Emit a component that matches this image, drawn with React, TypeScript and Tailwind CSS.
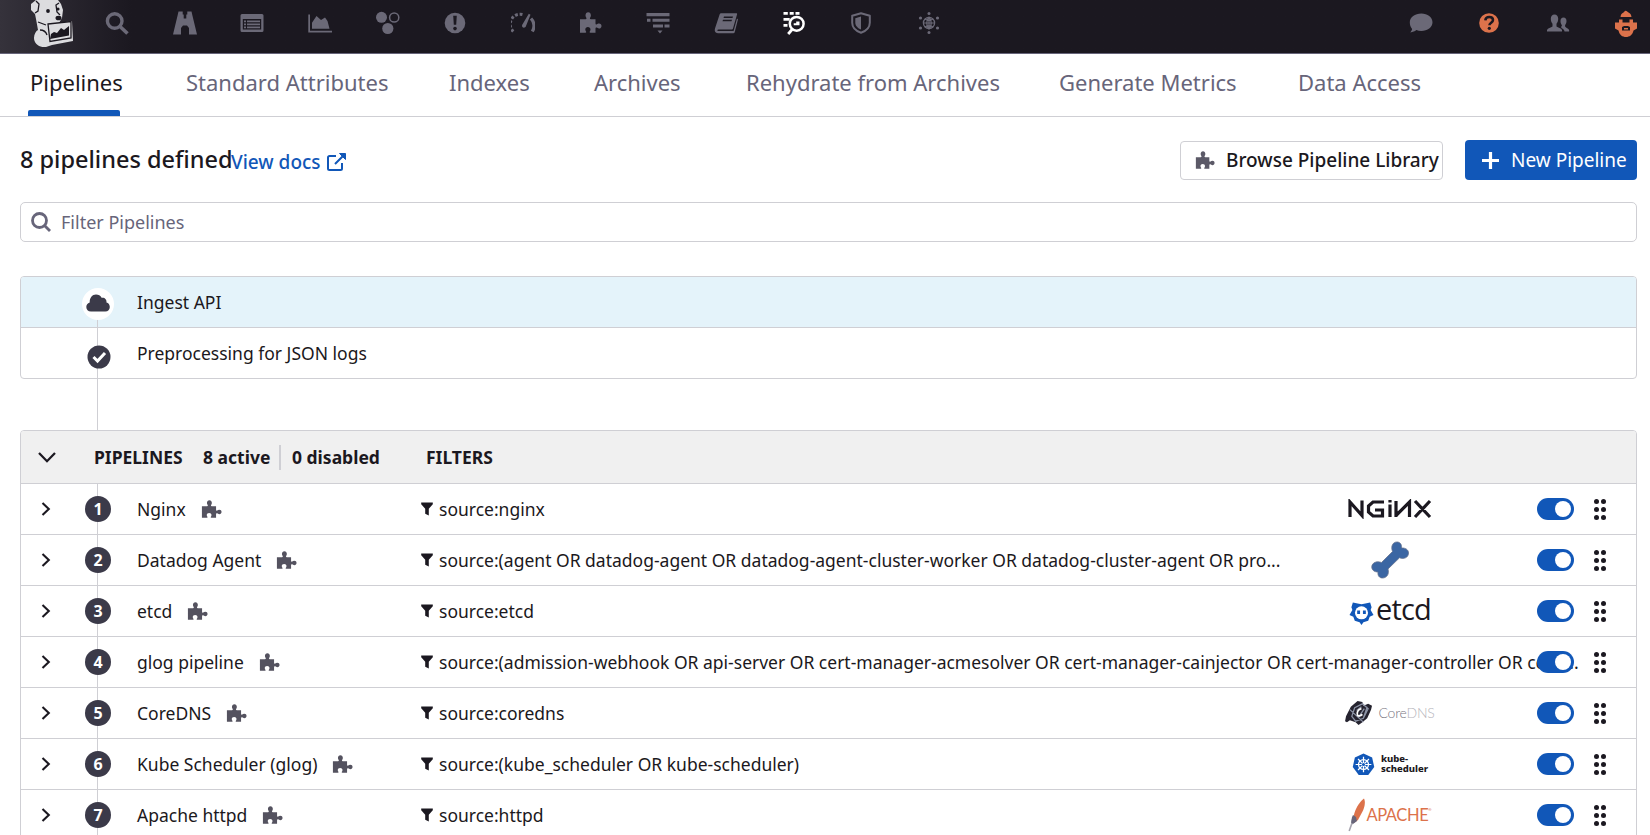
import React from "react";

type IconProps = { className?: string };

function Icon({ children, className = "" }: { children: React.ReactNode; className?: string }) {
  return (
    <svg viewBox="0 0 24 24" width="24" height="24" fill="currentColor" className={className}>
      {children}
    </svg>
  );
}

function Puzzle({ className = "h-[21px] w-[23px]" }: IconProps) {
  return (
    <svg viewBox="0 0 23 21" fill="currentColor" className={className} preserveAspectRatio="none">
      <path d="M1 7.2h5.6c.9 0 1.1-.7.7-1.4-.4-.6-.8-1.300-.8-2.200C6.500 1.500 7.600.3 9.200.3s2.700 1.200 2.700 3.300c0 .9-.4 1.600-.8 2.200-.4.700-.2 1.400.7 1.400h4.700v4.300c0 1 .6 1.200 1.300.8.600-.4 1.200-.9 2.200-.9 1.600 0 2.500 1.100 2.500 2.500s-.9 2.600-2.500 2.600c-1 0-1.600-.5-2.200-.9-.7-.4-1.300-.1-1.300.8v4.300h-5.200c-.7 0-.9-.6-.5-1.200.4-.6.7-1.100.7-1.900 0-1.500-1.100-2.500-2.600-2.500s-2.600 1-2.600 2.500c0 .8.300 1.300.7 1.900.4.600.2 1.200-.5 1.200H1z" />
    </svg>
  );
}

function DogLogo() {
  return (
    <svg viewBox="0 0 44 47" width="44" height="47" className="block">
      <path fill="#dcdcdf" d="M6 0l22 0 3 4 2 6-1 8-3 5 13-2 1 20-21 4-6 2c-6 1-12-3-12-9 0-4 2-7 4-8L6 19l-1-5L1 10 1 4z" />
      <path fill="none" stroke="#1b1820" strokeWidth="1.300" d="M6 1l3 3-1 7-3 2M29 3l-3 2 1 7 3 3M8 22l8 3M10 30c4 0 6 2 7 5M18 24l23-2.500V38L20 41.500z" />
      <circle cx="18" cy="11" r="1.900" fill="#1b1820" />
      <circle cx="28" cy="9" r="1.600" fill="#1b1820" />
      <ellipse cx="28.500" cy="18" rx="3" ry="2.300" fill="#1b1820" />
      <path fill="#1b1820" d="M20 39l1-5 3-2 3 1 4-5 3 2 5-4v9.500z" />
    </svg>
  );
}

const navIcons: { name: string; active?: boolean; art: React.ReactNode }[] = [
  {
    name: "search",
    art: (
      <Icon>
        <circle cx="9.700" cy="10" r="7.300" fill="none" stroke="currentColor" strokeWidth="3.400" />
        <path d="M15 15.500l7.500 7" stroke="currentColor" strokeWidth="3.600" />
      </Icon>
    ),
  },
  {
    name: "watchdog",
    art: (
      <Icon>
        <path d="M5.500.5h4.200v3h1v4h2.600v-4h1v-3h4.200l.8 3.500L24 23.500h-8V17l-2-2.500h-4L8 17v6.500H0L4.700 4z" />
      </Icon>
    ),
  },
  {
    name: "events",
    art: (
      <Icon>
        <path fillRule="evenodd" d="M2 3h20a1.500 1.500 0 011.500 1.500v15A1.500 1.500 0 0122 21H2A1.500 1.500 0 01.5 19.500v-15A1.500 1.500 0 012 3zm.8 5v10.600h18.400V8zM4 9.500h2v1.700H4zm3 0h13v1.700H7zM4 12.500h2v1.700H4zm3 0h13v1.700H7zm-3 3h2v1.700H4zm3 0h13v1.700H7z" />
      </Icon>
    ),
  },
  {
    name: "dashboards",
    art: (
      <Icon>
        <path d="M.3 3.500h1.700v16.200h22v1.700H.3z" />
        <path d="M4 17.800v-6L8.500 5l4.500 4 4-2.500 2.500 3.500 2 7.800z" />
      </Icon>
    ),
  },
  {
    name: "infrastructure",
    art: (
      <Icon>
        <circle cx="5.500" cy="6.300" r="5.500" />
        <circle cx="18.200" cy="6.500" r="4.600" fill="none" stroke="currentColor" strokeWidth="1.500" />
        <circle cx="11.800" cy="17.500" r="5.600" />
      </Icon>
    ),
  },
  {
    name: "monitors",
    art: (
      <Icon>
        <circle cx="12" cy="12" r="10.300" />
        <path d="M10.200 4.800h3.600l-.6 9h-2.400z" fill="#1b1820" />
        <circle cx="12" cy="17.600" r="1.800" fill="#1b1820" />
      </Icon>
    ),
  },
  {
    name: "apm",
    art: (
      <Icon>
        <path d="M2.300 20.500A10 10 0 0112.500 3.800" fill="none" stroke="currentColor" strokeWidth="3" strokeDasharray="2.800 1.800" />
        <path d="M20 7.500a10.500 10.500 0 011.300 13" fill="none" stroke="currentColor" strokeWidth="3.200" />
        <path d="M17.800 2.800l1.700 1-4.600 11.500c-1 2.500-4.500 1.500-3.800-1.300z" />
      </Icon>
    ),
  },
  { name: "integrations", art: <Puzzle className="h-[21px] w-[23px]" /> },
  {
    name: "traces",
    art: (
      <Icon>
        <path d="M.5 2h23v3.300H.5zM1 7.800h3.500v3H1zM6.500 7.800h17v3h-17zM7 13.600h10v3H7zM18.500 13.600h5v3h-5zM11.500 19.500h5l-2.500 3z" />
      </Icon>
    ),
  },
  {
    name: "notebooks",
    art: (
      <Icon>
        <path fillRule="evenodd" d="M7.500 2.200h14.800c.6 0 .9.400.8 1L19 17.500c-.2.600-.5.900-1.100.9H4.500c-1.500 0-1.500 1.700 0 1.700H19.600L23 7.500l1 .7-3.300 13c-.2.700-.7 1-1.400 1H4C1.200 22.200.3 20 1 17.500L5.600 3.600c.3-.9.900-1.400 1.900-1.400zM10 5.500l-.5 1.500h9l.5-1.500zM9 8.700l-.5 1.500h9l.5-1.500z" />
      </Icon>
    ),
  },
  {
    name: "logs",
    active: true,
    art: (
      <Icon>
        <path d="M1.500 1h4.300v2.800H1.500zM7.700 1h4v2.800h-4zM13.500 1h4v2.800h-4zM1.500 7h6.200v2.700H1.500zM1.500 13h4v2.700h-4z" />
        <circle cx="14.700" cy="12.800" r="6.900" fill="none" stroke="currentColor" strokeWidth="2.500" />
        <path d="M10.500 18l-4.300 5" stroke="currentColor" strokeWidth="2.800" />
        <path d="M11.700 14.200v-2h2.500v-1.700h3.300v3.700z" />
      </Icon>
    ),
  },
  {
    name: "security",
    art: (
      <Icon>
        <path d="M12 2.200l8.800 2.600v7c0 5-4 8.300-8.800 10-4.800-1.700-8.800-5-8.800-10v-7z" fill="none" stroke="currentColor" strokeWidth="2" strokeLinejoin="round" />
        <path d="M12 5.500v13c-3-1.200-5.700-3.500-5.700-7V7.200z" />
      </Icon>
    ),
  },
  {
    name: "synthetics",
    art: (
      <Icon>
        <circle cx="12" cy="12" r="5.600" fill="none" stroke="currentColor" strokeWidth="1.300" />
        <path d="M12 6v12M6 12h12M8 8c3 2 5 2 8 0M8 16c3-2 5-2 8 0M12 6c-3 3-3 9 0 12 3-3 3-9 0-12" fill="none" stroke="currentColor" strokeWidth="1.200" />
        <circle cx="12" cy="2.600" r="1.500" />
        <circle cx="12" cy="21.400" r="1.500" />
        <circle cx="3.500" cy="7" r="1.600" />
        <circle cx="20.500" cy="7" r="1.600" />
        <circle cx="3.500" cy="17" r="1.600" />
        <circle cx="20.500" cy="17" r="1.600" />
      </Icon>
    ),
  },
];

function TopBar() {
  return (
    <header className="flex h-[54px] items-start border-b border-[#67657a] bg-[#1b1820] bg-linear-to-r from-[#35323b] to-[#1b1820] to-8% text-[#6b6977]">
      <div className="ml-[30px] w-[53px]">
        <DogLogo />
      </div>
      <nav className="flex">
        {navIcons.map((i) => (
          <a
            key={i.name}
            className={i.active ? "flex h-[45px] w-[67.700px] items-center justify-center text-white" : "flex h-[45px] w-[67.700px] items-center justify-center"}
          >
            {i.art}
          </a>
        ))}
      </nav>
      <div className="ml-auto mr-[-10px] flex">
        <a className="flex h-[45px] w-[68.300px] items-center justify-center">
          <Icon>
            <path d="M12.300 2.500c6.300 0 11.200 3.800 11.200 8.800s-5 8.700-11.200 8.700c-1.800 0-3.500-.3-5-.9-1.500 1.400-3.500 2.100-6 2.300.9-1 1.600-2 1.800-3.300C1.600 16.300.8 14 .8 11.300c0-5 5.200-8.800 11.500-8.800z" />
          </Icon>
        </a>
        <a className="flex h-[45px] w-[68.300px] items-center justify-center text-[#dc724b]">
          <Icon>
            <circle cx="12" cy="12" r="9.800" />
            <path d="M8.300 9.300C8.500 7 10 5.900 12.200 5.900c2.200 0 3.800 1.200 3.800 3.100 0 2.600-3.600 2.700-3.600 5.200" fill="none" stroke="#1b1820" strokeWidth="2.500" />
            <circle cx="12.300" cy="17.300" r="1.600" fill="#1b1820" />
          </Icon>
        </a>
        <a className="flex h-[45px] w-[68.300px] items-center justify-center">
          <Icon>
            <path d="M8.500 3.500c2.300 0 3.700 1.600 3.700 4.300 0 2.200-.8 3.800-1.700 5v2.700c1.500 1.200 4.800 1.600 5.500 3.500v1.500H1V19c.7-1.900 4-2.300 5.500-3.500v-2.700c-.9-1.200-1.700-2.800-1.700-5 0-2.700 1.400-4.300 3.700-4.300zM17.500 6.500c1.900 0 3 1.300 3 3.500 0 1.700-.6 3-1.400 4v1.500c1 1.300 3.400 2 4 3.500v1.500h-4.500c-.3-2-2-2.700-3.300-3.500v-1.500c.6-.7.700-.8.500-1.500-.8-.9-1.300-2.200-1.300-4 0-2.200 1.100-3.500 3-3.500z" />
          </Icon>
        </a>
        <a className="flex h-[48px] w-[68.300px] items-center justify-center text-[#dc724b]">
          <svg viewBox="0 0 24 28" width="24" height="28" fill="currentColor">
            <path d="M11.500.8c1.500 0 2 1.200 3 1.700 1.800.7 2.600 2 3 4.500H6.500c.4-2.500 1.200-3.800 3-4.500 1-.5.900-1.700 2-1.700z" />
            <path fillRule="evenodd" d="M1 12.500h4V9.500h3.500v3H15.500v-3H19v3h4v6l-3.500 2C18.500 25 15.500 27 12 27s-6.500-2-7.500-6.500L1 18.500zM8 17v3.500h8V17l-2-1h-4z" />
            <path d="M10 18h4v1.500h-4z" />
          </svg>
        </a>
      </div>
    </header>
  );
}

const tabs = [
  { label: "Pipelines", active: true, width: "w-[88px]" },
  { label: "Standard Attributes", width: "w-[195px]" },
  { label: "Indexes", width: "w-[77px]" },
  { label: "Archives", width: "w-[84px]" },
  { label: "Rehydrate from Archives", width: "w-[245px]" },
  { label: "Generate Metrics", width: "w-[171px]" },
  { label: "Data Access", width: "w-[118px]" },
];

function Tabs() {
  return (
    <div className="flex h-[63px] gap-[68px] border-b border-[#cfcfd4] pl-[30px] text-[22px] text-[#67657a]">
      {tabs.map((t) => (
        <div key={t.label} className={t.width + " flex h-full flex-col whitespace-nowrap"}>
          <span className={t.active ? "flex h-[56px] items-center text-[#1b1820]" : "flex h-[56px] items-center"}>{t.label}</span>
          {t.active && <span className="-ml-0.5 h-[6px] w-[92px] shrink-0 rounded-t-xs bg-[#1157b8]" />}
        </div>
      ))}
    </div>
  );
}

function NginxLogo() {
  return (
    <svg viewBox="0 0 84 20" width="84" height="20" fill="none" stroke="#1b1820" strokeWidth="3.200">
      <path d="M2 18V3l12 13.500V1.500M36 3H25l-4.500 4v6l4.500 4h9.500v-6H27M42 5.500V18M42 1v2.600M48 18V2M48 16.500L61.500 3v15M67 2l15 16M82 2L67 18" />
    </svg>
  );
}

function BoneLogo() {
  return (
    <svg viewBox="0 0 38 38" width="38" height="38">
      <path
        fill="#3b66a3"
        stroke="#65718e"
        strokeWidth=".8"
        d="M10.500 21.500L21.500 10.500C19.500 5 22 1 26 1c3 0 5 2.300 4.500 6 4.500-.2 7 2 7 5 0 4.500-4.500 6.500-9 4.800L17 28c1.500 5.500-1.500 9-5.500 9C8.200 37 6.500 34.500 7 31 3 31 .8 28.800.8 26c0-4 4.500-6.500 9.700-4.500z"
      />
    </svg>
  );
}

function EtcdLogo() {
  return (
    <div className="flex items-center">
      <svg viewBox="0 0 26 26" width="25" height="26" className="mt-[4px]">
        <path fill="#1157b8" d="M4 2l5 1 4 1 4-1 5-1 1.500 5-1 3 3 5-4 2-1.500 4-5 1.500-2 3-2-3-5-1.500L4.500 17l-4-2 3-5-1-3z" />
        <circle cx="13" cy="12.800" r="6.800" fill="#fff" />
        <path fill="#1157b8" d="M8.500 10.500h3v3.500h-3zM14.500 10.500h3v3.500h-3z" />
      </svg>
      <span className="ml-0.5 h-[30px] font-['Open_Sans','Noto_Sans',sans-serif] text-[29px]/[26px] tracking-[-0.800px]">etcd</span>
    </div>
  );
}

function CoreDnsLogo() {
  return (
    <div className="flex items-center">
      <svg viewBox="0 0 30 27" width="29" height="26">
        <path fill="#25232f" d="M13 1l5 1 1 4 5-2 4 2-1 4-4 9-5 4-4 3-3-3-6-2-3 2-2-1 1-5 5-10z" />
        <path fill="none" stroke="#8d94a6" strokeWidth="1.300" d="M10 8l8-4 6 5-5 10-8 3-4-5zM12 11l5-4M20 9l-6 9M5 10l14 13M23 7l-4 12" />
        <path fill="none" stroke="#fff" strokeWidth="1.800" d="M17 9c-4 1-5 4-4 7 2 1 4 0 5-1" />
      </svg>
      <span className="ml-1 font-[Lato,sans-serif] text-[14px]/[20px] font-light tracking-[-0.200px] text-[#77757f]">
        Core<span className="text-[#b5b4bb]">DNS</span>
      </span>
    </div>
  );
}

function KubeLogo() {
  return (
    <div className="flex items-center">
      <svg viewBox="0 0 24 24" width="23" height="23">
        <path fill="#1157b8" d="M12 .5l9 4.300 2.200 9.700-6.200 8.500H7L.8 14.500 3 4.800z" />
        <g fill="none" stroke="#fff" strokeWidth="1.300">
          <circle cx="12" cy="12" r="5.200" />
          <path d="M12 3.800v16.400M3.800 12h16.400M6.300 6.300l11.400 11.400M17.700 6.300L6.300 17.700" />
        </g>
        <circle cx="12" cy="12" r="1.600" fill="#1157b8" />
      </svg>
      <span className="ml-1.5 text-[9.500px]/[10px] font-extrabold">
        kube-
        <br />
        scheduler
      </span>
    </div>
  );
}

function ApacheLogo() {
  return (
    <div className="flex items-center">
      <svg viewBox="0 0 18 34" width="18" height="34">
        <path fill="#dc724b" d="M16 .5c1.500 3 1 8-1.500 13L10 22l-4 3c-1.500-7 1-13 4.500-18.500C12.500 3.500 14.500 1.500 16 .5z" />
        <path fill="#67657a" d="M5 17l3 2 1 4-4 3-2 .5c0-3 .5-6.500 2-9.500z" />
        <path fill="none" stroke="#a5a3ae" strokeWidth="1.600" d="M4 25L1.200 33" />
      </svg>
      <span className="font-[Lato,sans-serif] text-[16.500px]/[20px] tracking-[-0.400px] text-[#dc724b]">APACHE</span>
      <span className="mb-2.5 text-[4px] text-[#dc724b]">®</span>
    </div>
  );
}

type Row = { name: string; filter: string; logo?: React.ReactNode; nameTracking?: string };

const rows: Row[] = [
  { name: "Nginx", filter: "source:nginx", logo: <NginxLogo /> },
  {
    name: "Datadog Agent",
    filter: "source:(agent OR datadog-agent OR datadog-agent-cluster-worker OR datadog-cluster-agent OR pro...",
    logo: <BoneLogo />,
  },
  { name: "etcd", filter: "source:etcd", logo: <EtcdLogo /> },
  {
    name: "glog pipeline",
    filter: "source:(admission-webhook OR api-server OR cert-manager-acmesolver OR cert-manager-cainjector OR cert-manager-controller OR cert-...",
  },
  { name: "CoreDNS", filter: "source:coredns", logo: <CoreDnsLogo /> },
  { name: "Kube Scheduler (glog)", filter: "source:(kube_scheduler OR kube-scheduler)", logo: <KubeLogo /> },
  { name: "Apache httpd", filter: "source:httpd", logo: <ApacheLogo /> },
  { name: "PostgreSQL", filter: "source:postgresql" },
];

function PipelineRow({ row, index }: { row: Row; index: number }) {
  return (
    <div className="flex h-[51px] items-center border-b border-[#cfcfd4]">
      <div className="flex w-[50px] justify-center">
        <svg viewBox="0 0 10 14" width="10" height="14" fill="none" stroke="#1b1820" strokeWidth="2.100">
          <path d="M1.500 1l6.300 6-6.300 6" />
        </svg>
      </div>
      <div className="relative flex h-[51px] w-[54px] shrink-0 items-center justify-center">
        <span className="absolute top-0 left-[26px] h-[51px] w-px bg-[#cfcfd4]" />
        <span className="relative flex size-[26px] items-center justify-center rounded-full bg-[#3b3a49] text-[16px] leading-none font-bold text-white">
          {index + 1}
        </span>
      </div>
      <div className="flex w-[279px] shrink-0 items-center pl-[12px] whitespace-nowrap">
        <span>{row.name}</span>
        <Puzzle className="ml-[15px] h-[18px] w-[21px] text-[#54525f]" />
      </div>
      <div className="flex w-0 grow items-center whitespace-nowrap">
        <svg viewBox="0 0 12 14" width="12" height="14" className="mr-[6px] ml-[17px] shrink-0" fill="#1b1820">
          <path d="M.2.500h11.600v1.700L7.800 6.800V13.500l-3.600-1.800V6.800L.2 2.200z" />
        </svg>
        <span>{row.filter}</span>
      </div>
      {row.logo && <div className="flex h-[50px] w-[84px] shrink-0 items-center justify-center whitespace-nowrap">{row.logo}</div>}
      <div className={row.logo ? "ml-[105px]" : "ml-0"}>
        <div className="relative flex h-[22px] w-[37px] items-center justify-end rounded-full bg-[#1157b8] pr-[3px]">
          <span className="size-[16px] rounded-full bg-white" />
        </div>
      </div>
      <div className="mr-[30px] ml-[20px] grid grid-cols-2 gap-x-[2px] gap-y-[3px]">
        {[0, 1, 2, 3, 4, 5].map((d) => (
          <span key={d} className="size-[5px] rounded-full bg-[#1b1820]" />
        ))}
      </div>
    </div>
  );
}

export default function App() {
  return (
    <div className="h-[835px] w-[1650px] overflow-hidden bg-white font-['Noto_Sans',sans-serif] text-[#1b1820]">
      <TopBar />
      <Tabs />
      <main className="pr-[13px] pl-[20px]">
        <div className="flex h-[86px] items-center">
          <h1 className="w-[211px] text-[23.500px] font-medium whitespace-nowrap">8 pipelines defined</h1>
          <a className="mt-1 flex items-center text-[19px] font-medium whitespace-nowrap text-[#1157b8]">
            View docs
            <svg viewBox="0 0 21 20" width="21" height="20" className="ml-[5px]" fill="none" stroke="currentColor" strokeWidth="2">
              <path d="M10 4H3.500A1.500 1.500 0 002 5.500v11A1.500 1.500 0 003.500 18h11a1.500 1.500 0 001.500-1.500V11M9 12l9-9" />
              <path d="M13.500 1.500h6v6z" fill="currentColor" strokeWidth="1" />
            </svg>
          </a>
          <div className="ml-auto flex items-center gap-[22px] text-[19px] whitespace-nowrap">
            <button className="flex h-[39px] w-[263px] items-center rounded-[4px] border border-[#cfcfd4] pl-[14px] font-medium">
              <Puzzle className="mr-[11px] h-[18px] w-[20px] text-[#5b5967]" />
              Browse Pipeline Library
            </button>
            <button className="flex h-[40px] w-[172px] items-center rounded-[4px] bg-[#1157b8] pl-[17px] text-white">
              <svg viewBox="0 0 17 17" width="17" height="17" className="mr-[12px]" fill="none" stroke="currentColor" strokeWidth="3.200">
                <path d="M8.500 0v17M0 8.500h17" />
              </svg>
              New Pipeline
            </button>
          </div>
        </div>
        <div className="mt-[-1px] flex h-[40px] items-center rounded-[5px] border border-[#cfcfd4] pl-[10px] text-[18px] text-[#67657a]">
          <svg viewBox="0 0 20 20" width="20" height="20" className="mr-[10px]" fill="none" stroke="currentColor" strokeWidth="2.800">
            <circle cx="8.500" cy="8.500" r="7" />
            <path d="M13.500 13.500l5.500 5.500" />
          </svg>
          Filter Pipelines
        </div>

        <section className="mt-[34px] rounded-[4px] border border-[#cfcfd4] text-[17.500px]">
          <div className="flex h-[51px] items-center rounded-t-[3px] border-b border-[#cfcfd4] bg-[#e4f3fa]">
            <div className="relative ml-[61px] flex h-[51px] w-[32px] items-center justify-center">
              <span className="absolute top-[30px] left-[15px] h-[21px] w-px bg-[#cfcfd4]" />
              <span className="relative mt-1 flex size-[32px] items-center justify-center rounded-full bg-white">
                <svg viewBox="0 0 24 18" width="24" height="18" fill="#3b3a49" className="mb-[3px]">
                  <path d="M5 17.500C2 17.500.3 15.500.3 13c0-2.300 1.200-4 3.400-4.600C3.500 4 6.200.6 10 .6c2.500 0 4.500 1.200 5.600 3.200 3-.6 5.200 1.700 4.900 4.600 2 .5 3.300 2.200 3.300 4.500 0 2.700-1.800 4.600-4.500 4.600z" />
                </svg>
              </span>
            </div>
            <span className="ml-[23px]">Ingest API</span>
          </div>
          <div className="flex h-[50px] items-center">
            <div className="relative ml-[61px] flex h-[50px] w-[32px] items-center justify-center">
              <span className="absolute top-0 left-[15px] h-[102px] w-px bg-[#cfcfd4]" />
              <svg viewBox="0 0 24 24" width="24" height="24" className="relative mt-[7px] ml-px bg-transparent">
                <circle cx="12" cy="12" r="11.500" fill="#3b3a49" />
                <path d="M6.500 12l4 4 7.500-8" fill="none" stroke="#fff" strokeWidth="3" />
              </svg>
            </div>
            <span className="ml-[23px]">Preprocessing for JSON logs</span>
          </div>
        </section>

        <section className="mt-[51px] rounded-t-[4px] border border-[#cfcfd4] text-[17.500px]">
          <div className="flex h-[53px] items-center rounded-t-[3px] border-b border-[#cfcfd4] bg-[#f0f0f0] font-bold whitespace-nowrap">
            <svg viewBox="0 0 18 11" width="18" height="11" className="ml-[17px]" fill="none" stroke="#1b1820" strokeWidth="2.300">
              <path d="M1 1l8 8.200L17 1" />
            </svg>
            <span className="ml-[38px] w-[109px]">PIPELINES</span>
            <span className="w-[76px]">8 active</span>
            <span className="h-[25px] w-[2px] bg-[#cfcfd4]" />
            <span className="ml-[11px] w-[134px]">0 disabled</span>
            <span>FILTERS</span>
          </div>
          {rows.map((row, i) => (
            <PipelineRow key={row.name} row={row} index={i} />
          ))}
        </section>
      </main>
    </div>
  );
}
